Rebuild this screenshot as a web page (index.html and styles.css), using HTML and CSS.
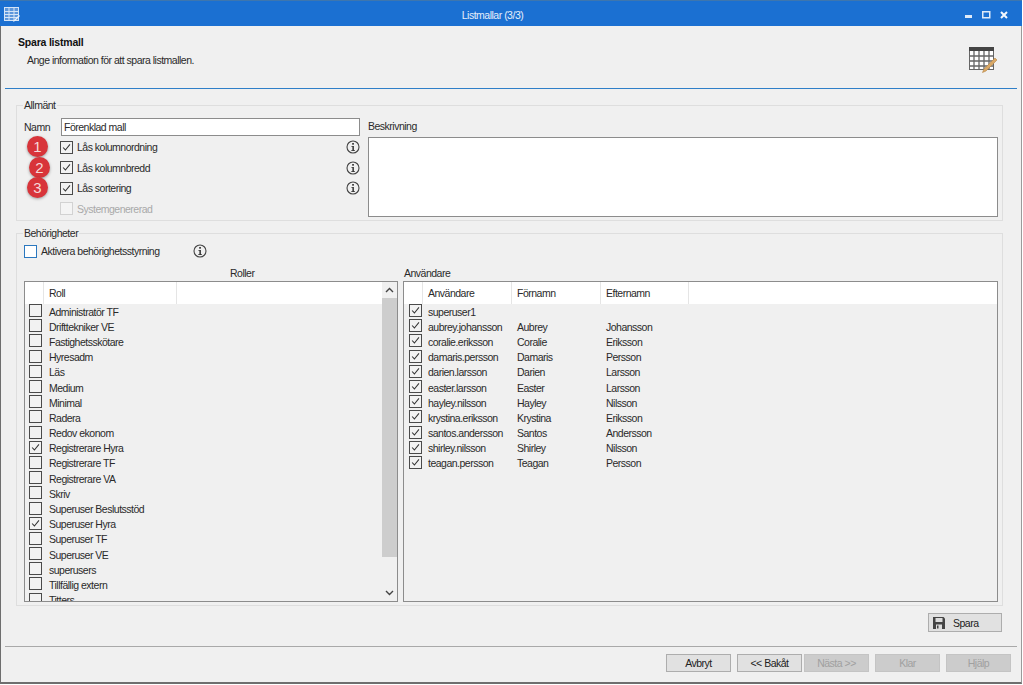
FILE: index.html
```html
<!DOCTYPE HTML>
<html>

<head>
    <meta charset="utf-8">
    <link rel="stylesheet" href="styles.css">
</head>

<body>
    <svg class="defs" width="0" height="0">
        <symbol id="tick" viewBox="0 0 13 13">
            <path d="M2.5 6.5 L5.2 9.4 L10.6 2.8" fill="none" stroke="#333" stroke-width="1.2" />
        </symbol>
        <symbol id="info" viewBox="0 0 14 14">
            <circle cx="7" cy="7" r="6" fill="none" stroke="#444" stroke-width="1.1" />
            <rect x="6.2" y="3" width="1.7" height="1.7" fill="#333" />
            <path d="M5.4 6 H7.9 V10.2 H9 V11 H5.2 V10.2 H6.4 V6.8 H5.4 Z" fill="#333" />
        </symbol>
        <symbol id="grid" viewBox="0 0 28 26">
            <rect x="0.5" y="0.5" width="24" height="22" fill="#fff" stroke="#666" />
            <rect x="0" y="0" width="25" height="4" fill="#444" />
            <path d="M0 9 H25 M0 14 H25 M0 19 H25 M5 4 V23 M10 4 V23 M15 4 V23 M20 4 V23" stroke="#666" stroke-width="1.3" fill="none" />
            <path d="M26 11 L28 13 L17 24 L13.5 25.5 L15 22 Z" fill="#d9a866" stroke="#b98745" stroke-width="0.6" />
        </symbol>
    </svg>

    <div class="window">
        <div class="titlebar">
            <svg class="title-icon" width="16" height="15">
                <rect x="0.5" y="0.5" width="14" height="13" fill="#5d97dc" stroke="#d5e4f6" />
                <path d="M1 4.5 H14 M1 7.5 H14 M1 10.5 H14 M5 1 V13 M10 1 V13" stroke="#d5e4f6" fill="none" />
                <path d="M15 8 L16 9 L11 14 L9 15 L10 13 Z" fill="#e9f1fb" />
            </svg>
            <span class="title-text">Listmallar (3/3)</span>
            <div class="title-buttons">
                <svg width="8" height="8"><rect x="0" y="4" width="7" height="3" fill="#dfeaf8" /></svg>
                <svg width="9" height="8"><rect x="0.75" y="0.75" width="7" height="6" fill="none" stroke="#dfeaf8" stroke-width="1.5" /></svg>
                <svg width="8" height="8"><path d="M1 1 L7 7 M7 1 L1 7" stroke="#f4f8fd" stroke-width="2" /></svg>
            </div>
        </div>

        <div class="header">
            <div>
                <div class="header-title">Spara listmall</div>
                <div class="header-sub">Ange information för att spara listmallen.</div>
            </div>
            <svg class="header-icon" width="28" height="26"><use href="#grid" /></svg>
        </div>

        <div class="content">
            <fieldset class="group general">
                <legend>Allmänt</legend>
                <div class="general-left">
                    <div class="name-row">
                        <label class="name-label">Namn</label>
                        <div class="input">Förenklad mall</div>
                    </div>
                    <div class="opt"><span class="box"><svg><use href="#tick" /></svg></span><span class="opt-text">Lås kolumnordning</span><svg class="info"><use href="#info" /></svg><span class="badge">1</span></div>
                    <div class="opt"><span class="box"><svg><use href="#tick" /></svg></span><span class="opt-text">Lås kolumnbredd</span><svg class="info"><use href="#info" /></svg><span class="badge badge-2">2</span></div>
                    <div class="opt"><span class="box"><svg><use href="#tick" /></svg></span><span class="opt-text">Lås sortering</span><svg class="info"><use href="#info" /></svg><span class="badge">3</span></div>
                    <div class="opt disabled"><span class="box"></span><span class="opt-text">Systemgenererad</span></div>
                </div>
                <div class="general-right">
                    <label class="desc-label">Beskrivning</label>
                    <div class="textarea"></div>
                </div>
            </fieldset>

            <fieldset class="group perms">
                <legend>Behörigheter</legend>
                <div class="activate">
                    <span class="box box-blue"></span>
                    <span class="activate-text">Aktivera behörighetsstyrning</span>
                    <svg class="info"><use href="#info" /></svg>
                </div>
                <div class="lists">
                    <div class="list-col roles">
                        <div class="list-title roles-title">Roller</div>
                        <div class="list">
                            <div class="list-main">
                                <div class="list-head">
                                    <span class="c-check"></span>
                                    <span class="c-role">Roll</span>
                                </div>
                                <div class="row"><span class="c-check"><span class="box"></span></span><span class="c-role">Administratör TF</span></div>
                                <div class="row"><span class="c-check"><span class="box"></span></span><span class="c-role">Drifttekniker VE</span></div>
                                <div class="row"><span class="c-check"><span class="box"></span></span><span class="c-role">Fastighetsskötare</span></div>
                                <div class="row"><span class="c-check"><span class="box"></span></span><span class="c-role">Hyresadm</span></div>
                                <div class="row"><span class="c-check"><span class="box"></span></span><span class="c-role">Läs</span></div>
                                <div class="row"><span class="c-check"><span class="box"></span></span><span class="c-role">Medium</span></div>
                                <div class="row"><span class="c-check"><span class="box"></span></span><span class="c-role">Minimal</span></div>
                                <div class="row"><span class="c-check"><span class="box"></span></span><span class="c-role">Radera</span></div>
                                <div class="row"><span class="c-check"><span class="box"></span></span><span class="c-role">Redov ekonom</span></div>
                                <div class="row"><span class="c-check"><span class="box"><svg><use href="#tick" /></svg></span></span><span class="c-role">Registrerare Hyra</span></div>
                                <div class="row"><span class="c-check"><span class="box"></span></span><span class="c-role">Registrerare TF</span></div>
                                <div class="row"><span class="c-check"><span class="box"></span></span><span class="c-role">Registrerare VA</span></div>
                                <div class="row"><span class="c-check"><span class="box"></span></span><span class="c-role">Skriv</span></div>
                                <div class="row"><span class="c-check"><span class="box"></span></span><span class="c-role">Superuser Beslutsstöd</span></div>
                                <div class="row"><span class="c-check"><span class="box"><svg><use href="#tick" /></svg></span></span><span class="c-role">Superuser Hyra</span></div>
                                <div class="row"><span class="c-check"><span class="box"></span></span><span class="c-role">Superuser TF</span></div>
                                <div class="row"><span class="c-check"><span class="box"></span></span><span class="c-role">Superuser VE</span></div>
                                <div class="row"><span class="c-check"><span class="box"></span></span><span class="c-role">superusers</span></div>
                                <div class="row"><span class="c-check"><span class="box"></span></span><span class="c-role">Tillfällig extern</span></div>
                                <div class="row"><span class="c-check"><span class="box"></span></span><span class="c-role">Titters</span></div>
                            </div>
                            <div class="scrollbar">
                                <svg width="15" height="16"><path d="M4 10 L7.5 6.5 L11 10" fill="none" stroke="#444" stroke-width="1.4" /></svg>
                                <div class="thumb"></div>
                                <svg width="15" height="16"><path d="M4 6 L7.5 9.5 L11 6" fill="none" stroke="#444" stroke-width="1.4" /></svg>
                            </div>
                        </div>
                    </div>

                    <div class="list-col users">
                        <div class="list-title users-title">Användare</div>
                        <div class="list">
                            <div class="list-main">
                                <div class="list-head">
                                    <span class="c-check"></span>
                                    <span class="c-user">Användare</span>
                                    <span class="c-first">Förnamn</span>
                                    <span class="c-last">Efternamn</span>
                                </div>
                                <div class="row"><span class="c-check"><span class="box"><svg><use href="#tick" /></svg></span></span><span class="c-user">superuser1</span><span class="c-first"></span><span class="c-last"></span></div>
                                <div class="row"><span class="c-check"><span class="box"><svg><use href="#tick" /></svg></span></span><span class="c-user">aubrey.johansson</span><span class="c-first">Aubrey</span><span class="c-last">Johansson</span></div>
                                <div class="row"><span class="c-check"><span class="box"><svg><use href="#tick" /></svg></span></span><span class="c-user">coralie.eriksson</span><span class="c-first">Coralie</span><span class="c-last">Eriksson</span></div>
                                <div class="row"><span class="c-check"><span class="box"><svg><use href="#tick" /></svg></span></span><span class="c-user">damaris.persson</span><span class="c-first">Damaris</span><span class="c-last">Persson</span></div>
                                <div class="row"><span class="c-check"><span class="box"><svg><use href="#tick" /></svg></span></span><span class="c-user">darien.larsson</span><span class="c-first">Darien</span><span class="c-last">Larsson</span></div>
                                <div class="row"><span class="c-check"><span class="box"><svg><use href="#tick" /></svg></span></span><span class="c-user">easter.larsson</span><span class="c-first">Easter</span><span class="c-last">Larsson</span></div>
                                <div class="row"><span class="c-check"><span class="box"><svg><use href="#tick" /></svg></span></span><span class="c-user">hayley.nilsson</span><span class="c-first">Hayley</span><span class="c-last">Nilsson</span></div>
                                <div class="row"><span class="c-check"><span class="box"><svg><use href="#tick" /></svg></span></span><span class="c-user">krystina.eriksson</span><span class="c-first">Krystina</span><span class="c-last">Eriksson</span></div>
                                <div class="row"><span class="c-check"><span class="box"><svg><use href="#tick" /></svg></span></span><span class="c-user">santos.andersson</span><span class="c-first">Santos</span><span class="c-last">Andersson</span></div>
                                <div class="row"><span class="c-check"><span class="box"><svg><use href="#tick" /></svg></span></span><span class="c-user">shirley.nilsson</span><span class="c-first">Shirley</span><span class="c-last">Nilsson</span></div>
                                <div class="row"><span class="c-check"><span class="box"><svg><use href="#tick" /></svg></span></span><span class="c-user">teagan.persson</span><span class="c-first">Teagan</span><span class="c-last">Persson</span></div>
                            </div>
                        </div>
                    </div>
                </div>
            </fieldset>

            <div class="save-row">
                <button class="button save">
                    <svg width="12" height="12" viewBox="0 0 12 12">
                        <path d="M0 0 H10.5 L12 1.5 V12 H0 Z" fill="#444" />
                        <rect x="2.5" y="1" width="7" height="4" fill="#ddd" />
                        <rect x="3" y="7.5" width="6" height="4.5" fill="#ddd" />
                        <rect x="4" y="8.5" width="1.5" height="3" fill="#444" />
                    </svg>
                    <span>Spara</span>
                </button>
            </div>
        </div>

        <div class="footer">
            <button class="button">Avbryt</button>
            <button class="button back">&lt;&lt; Bakåt</button>
            <button class="button next" disabled>Nästa &gt;&gt;</button>
            <button class="button done" disabled>Klar</button>
            <button class="button help" disabled>Hjälp</button>
        </div>
    </div>
</body>

</html>
```

FILE: styles.css
```css
html,
body {
    margin: 0;
    height: 100%;
    overflow: hidden;
    background: #fff;
}

body {
    font-family: "Liberation Sans", Arial, sans-serif;
    font-size: 10.5px;
    letter-spacing: -0.5px;
    color: #2a2a2a;
}

.defs {
    position: absolute;
}

.window {
    display: flex;
    flex-direction: column;
    box-sizing: border-box;
    width: 1022px;
    height: 684px;
    background: #f0f0f0;
    border-left: 1px solid #6e6e6e;
    border-right: 1px solid #9a9a9a;
    border-bottom: 2px solid #6e6e6e;
}

/* title bar */

.titlebar {
    display: flex;
    align-items: center;
    flex: none;
    box-sizing: border-box;
    height: 26px;
    margin-left: -1px;
    margin-right: -1px;
    padding: 2px 14px 0 4px;
    background: #1b70d2;
    border-top: 1px solid #3e76ae;
    color: #e4eefa;
}

.title-text {
    flex: 1;
    text-align: center;
}

.title-buttons {
    display: flex;
    align-items: center;
    gap: 9px;
}

/* header */

.header {
    display: flex;
    justify-content: space-between;
    flex: none;
    box-sizing: border-box;
    height: 63px;
    margin: 0 4px;
    padding: 10px 20px 0 13px;
    border-bottom: 1px solid #2f7fc8;
}

.header-title {
    font-weight: bold;
    letter-spacing: -0.2px;
    color: #111;
}

.header-sub {
    margin-top: 6px;
    padding-left: 9px;
}

.header-icon {
    margin-top: 11px;
}

/* groups */

.content {
    flex: 1;
    padding: 10px 18px 0 15px;
}

.group {
    display: flex;
    box-sizing: border-box;
    min-width: 0;
    margin: 0;
    padding: 0 4px 0 7px;
    border: 1px solid #dedede;
}

.group legend {
    margin-left: -1px;
    padding: 0 1px;
    line-height: 13px;
}

.general {
    gap: 8px;
    height: 122px;
}

.perms {
    display: block;
    height: 379px;
    margin-top: 6px;
}

.general-left {
    flex: none;
    width: 336px;
    padding-top: 5px;
}

.general-right {
    flex: 1;
    display: flex;
    flex-direction: column;
    padding-top: 8px;
}

.name-row {
    display: flex;
    align-items: center;
    height: 20px;
}

.name-label {
    width: 37px;
}

.input {
    flex: 1;
    box-sizing: border-box;
    height: 18px;
    padding: 2px 2px;
    background: #fff;
    border: 1px solid #8c8c8c;
}

.opt {
    position: relative;
    display: flex;
    align-items: center;
    height: 20.5px;
    padding-left: 36px;
}

.opt-text {
    flex: 1;
    margin-left: 4px;
}

.disabled {
    color: #a9a9a9;
}

.disabled .box {
    background: #f4f4f4;
    border-color: #d2d2d2;
}

.box {
    display: inline-block;
    flex: none;
    box-sizing: border-box;
    width: 13px;
    height: 13px;
    background: #f2f2f2;
    border: 1px solid #4a4a4a;
}

.box svg {
    display: block;
    width: 11px;
    height: 11px;
}

.box-blue {
    background: #fff;
    border-color: #2b78bf;
}

.info {
    flex: none;
    width: 14px;
    height: 14px;
}

.badge {
    position: absolute;
    left: 3px;
    top: -1px;
    width: 21px;
    height: 21px;
    line-height: 21px;
    letter-spacing: 0;
    text-align: center;
    border-radius: 50%;
    background: #d8343a;
    box-shadow: 0 1px 3px rgba(0, 0, 0, 0.35);
    color: #f6d9d9;
    font-size: 15px;
}

.badge-2 {
    left: 5px;
}

.desc-label {
    height: 13px;
}

.textarea {
    box-sizing: border-box;
    height: 80px;
    margin-top: 4px;
    background: #fff;
    border: 1px solid #8c8c8c;
}

/* permissions */

.activate {
    display: flex;
    align-items: center;
    height: 20px;
    margin-top: 1px;
}

.activate-text {
    width: 152px;
    margin-left: 4px;
}

.lists {
    display: flex;
    gap: 5px;
    margin-top: 6px;
}

.list-col {
    display: flex;
    flex-direction: column;
    flex: none;
}

.roles {
    width: 374px;
}

.users {
    width: 595px;
}

.list-title {
    height: 14px;
    line-height: 13px;
}

.roles-title {
    padding-left: 206px;
}

.users-title {
    padding-left: 1px;
}

.list {
    display: flex;
    box-sizing: border-box;
    height: 321px;
    overflow: hidden;
    border: 1px solid #8c8c8c;
}

.list-main {
    flex: 1;
    min-width: 0;
    overflow: hidden;
}

.list-head {
    display: flex;
    align-items: center;
    height: 22px;
    background: #fff;
}

.list-head span {
    align-self: stretch;
    display: flex;
    align-items: center;
    box-sizing: border-box;
    border-right: 1px solid #e5e5e5;
}

.row {
    display: flex;
    align-items: center;
    height: 15.2px;
}

.row span {
    white-space: nowrap;
}

.c-check {
    flex: none;
    width: 19px;
    padding-left: 5px;
    box-sizing: border-box;
}

.roles .c-check {
    padding-left: 4px;
}

.c-role {
    flex: none;
    width: 133px;
    padding-left: 5px;
    box-sizing: border-box;
}

.c-user,
.c-first,
.c-last {
    flex: none;
    box-sizing: border-box;
    padding-left: 5px;
}

.c-user {
    width: 89px;
}

.c-first {
    width: 89px;
}

.c-last {
    width: 88px;
}

.scrollbar {
    display: flex;
    flex-direction: column;
    flex: none;
    width: 15px;
    background: #f0f0f0;
}

.thumb {
    flex: none;
    height: 259px;
    background: #cdcdcd;
}

.scrollbar svg:last-child {
    margin-top: 28px;
}

/* buttons */

.button {
    box-sizing: border-box;
    width: 65px;
    height: 18px;
    padding: 0;
    font-family: inherit;
    font-size: 10.5px;
    letter-spacing: inherit;
    color: #222;
    background: #e1e1e1;
    border: 1px solid #adadad;
}

.button:disabled {
    color: #a0a0a0;
    background: #cccccc;
    border-color: #c4c4c4;
}

.save-row {
    display: flex;
    justify-content: flex-end;
    margin-top: 7px;
    padding-right: 1px;
}

.save {
    display: flex;
    align-items: center;
    width: 74px;
    height: 19px;
    padding-left: 4px;
}

.save span {
    margin-left: 8px;
}

.footer {
    display: flex;
    flex: none;
    box-sizing: border-box;
    height: 36px;
    margin: 0 4px;
    padding: 7px 6px 0 0;
    justify-content: flex-end;
    border-top: 1px solid #a9a9a9;
}

.back {
    margin-left: 6px;
}

.next {
    margin-left: 2px;
}

.done,
.help {
    margin-left: 6px;
}
```
